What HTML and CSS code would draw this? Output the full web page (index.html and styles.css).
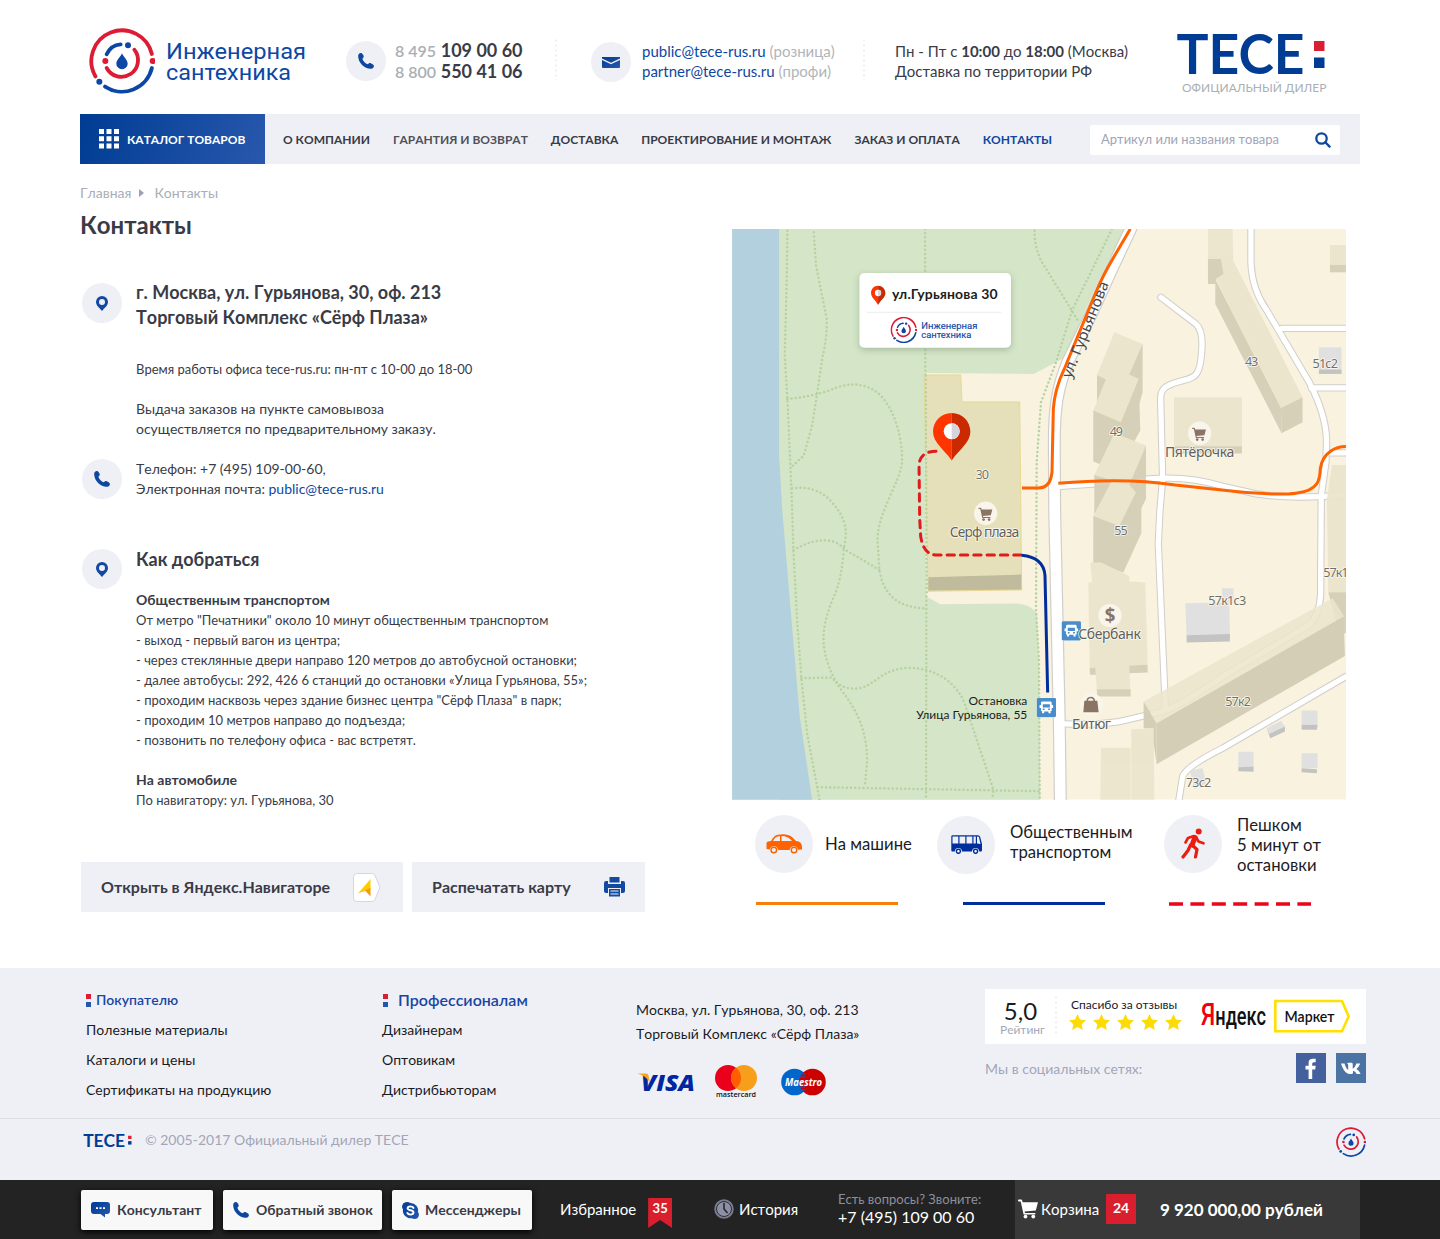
FILE: index.html
```html
<!DOCTYPE html>
<html lang="ru">
<head>
<meta charset="utf-8">
<title>Контакты — Инженерная сантехника</title>
<link rel="stylesheet" href="styles.css">
</head>
<body>
<svg class="defs" aria-hidden="true">
  <defs>
    <linearGradient id="blue" x1="0" y1="0" x2="1" y2="1"><stop offset="0" stop-color="#003c93"/><stop offset="1" stop-color="#2858ad"/></linearGradient>
  </defs>
  <symbol id="i-logo" viewBox="-99 -99 198 198">
    <g fill="none" stroke-width="11.5" stroke-linecap="round">
      <path stroke="#dc1c35" d="M89.600-21A92 92 0 1 0-79.500 46.300"/>
      <path stroke="#0d47a5" d="M89.600 21A92 92 0 0 1-50.800 76.700"/>
      <path stroke="#0d47a5" d="M-46-20A50 50 0 0 1-4-50"/>
      <path stroke="#dc1c35" d="M37-34A50 50 0 1 1-46 21"/>
    </g>
    <circle cx="92" cy="0" r="9" fill="#dc1c35"/><circle cx="-68" cy="62" r="9" fill="#0d47a5"/>
    <circle cx="18" cy="-47" r="9" fill="#0d47a5"/><circle cx="-50" cy="0" r="9" fill="#dc1c35"/>
    <path fill="#0d47a5" d="M0-23C5-11 17-3 17 8A17 16.500 0 0 1-17 8C-17-3-5-11 0-23Z"/>
  </symbol>
  <symbol id="i-tece" viewBox="0 0 150 42">
    <text class="tece-word" x="0.500" y="41" textLength="128" lengthAdjust="spacingAndGlyphs">TECE</text>
    <path fill="#d91f33" d="M138 8h10.500v10h-10.500z"/><path fill="#003c93" d="M138 24.500h10.500v10.500h-10.500z"/>
  </symbol>
  <symbol id="i-phone" viewBox="0 0 16 16">
    <path d="M.2 2.600C.4 1.200 1.500.2 2.700.1 3.500 0 4.100.3 4.500.9l1 1.700c.4.800.2 1.700-.4 2.300l-.7.800c.5 2.200 2.900 4.800 5.400 5.500l.9-.8c.6-.5 1.400-.5 2.100-.2l2.200 1.200c.7.400 1 1 .9 1.800-.2 1.300-1.200 2.500-2.700 2.600C7 16.400-.3 9.500.2 2.600Z"/>
  </symbol>
  <symbol id="i-pin" viewBox="0 0 12 15">
    <path fill-rule="evenodd" d="M6 0a6 6 0 0 1 6 6c0 3.600-3.600 6-6 9-2.400-3-6-5.400-6-9a6 6 0 0 1 6-6Zm0 3a3 3 0 1 0 0 6 3 3 0 0 0 0-6Z"/>
  </symbol>
  <symbol id="i-star" viewBox="0 0 17 16"><path fill="#fcdc04" d="M8.500 0l2.500 5.400 6 .8-4.300 4 1.100 5.800-5.300-2.900L3.200 16l1.100-5.800L0 6.200l6-.8z"/></symbol>
  <symbol id="i-trolley" viewBox="0 0 20 20">
    <path d="M0 1.500C0 .9.400.6.900.6h2.300c.5 0 .9.300 1 .8l.4 1.800H20l-2.200 8.300-11.200 1.100.3 1.300h10.400v1.600H5.600L2.700 2.400H.9C.4 2.400 0 2 0 1.500Z"/><circle cx="7.500" cy="17.600" r="1.900"/><circle cx="15.300" cy="17.600" r="1.900"/>
  </symbol>
  <symbol id="i-busstop" viewBox="0 0 56 56">
    <rect width="56" height="56" rx="6" fill="#fff"/><rect x="1" y="1" width="54" height="54" rx="4" fill="#4a8bc9"/>
    <path fill="#fff" fill-rule="evenodd" d="M17 11h22q4 0 4 4v6h4v8h-4v9h-3v6h-6v-5H22v5h-6v-6h-3v-9H9v-8h4v-6q0-4 4-4Zm1 8v9h20v-9Zm0 12v4h5v-4Zm15 0v4h5v-4Z"/>
  </symbol>
</svg>

<header class="header">
  <a class="brand">
    <svg class="brand-mark"><use href="#i-logo"/></svg>
    <svg class="brand-name" viewBox="0 0 144 48">
      <text x="1" y="20.500" textLength="140" lengthAdjust="spacingAndGlyphs">Инженерная</text>
      <text x="1" y="42" textLength="125" lengthAdjust="spacingAndGlyphs">сантехника</text>
    </svg>
  </a>
  <div class="contact phones">
    <span class="bubble"><svg class="ico-phone"><use href="#i-phone"/></svg></span>
    <p><span>8 495</span> <b>109 00 60</b><br><span>8 800</span> <b>550 41 06</b></p>
  </div>
  <i class="dots"></i>
  <div class="contact mails">
    <span class="bubble"><svg class="ico-mail" viewBox="0 0 18 11"><path fill="url(#blue)" d="M0 0h18v1.500L9 5.800 0 1.500zM0 3l9 4.300L18 3v7q0 1-1 1H1q-1 0-1-1z"/></svg></span>
    <p><a>public@tece-rus.ru</a> (розница)<br><a>partner@tece-rus.ru</a> (профи)</p>
  </div>
  <i class="dots"></i>
  <p class="hours">Пн - Пт с <b>10:00</b> до <b>18:00</b> (Москва)<br>Доставка по территории РФ</p>
  <div class="dealer">
    <svg class="dealer-logo"><use href="#i-tece"/></svg>
    <span>ОФИЦИАЛЬНЫЙ ДИЛЕР</span>
  </div>
</header>

<nav class="nav">
  <a class="catalog">
    <svg viewBox="0 0 20 20"><path fill="#fff" d="M0 0h5v5H0zm7.500 0h5v5h-5zM15 0h5v5h-5zM0 7.200h5v5H0zm7.500 0h5v5h-5zm7.500 0h5v5h-5zM0 14.400h5v5H0zm7.500 0h5v5h-5zm7.500 0h5v5h-5z"/></svg>
    <span>КАТАЛОГ ТОВАРОВ</span>
  </a>
  <a>О КОМПАНИИ</a><a class="soft">ГАРАНТИЯ И ВОЗВРАТ</a><a>ДОСТАВКА</a><a>ПРОЕКТИРОВАНИЕ И МОНТАЖ</a><a>ЗАКАЗ И ОПЛАТА</a><a class="active">КОНТАКТЫ</a>
  <div class="search">
    <span>Артикул или названия товара</span>
    <svg viewBox="0 0 16 16"><circle cx="6.500" cy="6.500" r="5.200"/><path d="M10.300 10.300l4.300 4.300"/></svg>
  </div>
</nav>

<main class="main">
  <section class="info">
    <div class="crumbs"><a>Главная</a><i></i><span>Контакты</span></div>
    <h1>Контакты</h1>

    <div class="row place">
      <span class="bubble"><svg class="ico-pin"><use href="#i-pin"/></svg></span>
      <div>
        <h2>г. Москва, ул. Гурьянова, 30, оф. 213<br>Торговый Комплекс «Сёрф Плаза»</h2>
        <p class="small">Время работы офиса tece-rus.ru: пн-пт с 10-00 до 18-00</p>
        <p class="pickup">Выдача заказов на пункте самовывоза<br>осуществляется по предварительному заказу.</p>
      </div>
    </div>
    <div class="row call">
      <span class="bubble"><svg class="ico-phone"><use href="#i-phone"/></svg></span>
      <p>Телефон: +7 (495) 109-00-60,<br>Электронная почта: <a>public@tece-rus.ru</a></p>
    </div>
    <div class="row route">
      <span class="bubble"><svg class="ico-pin"><use href="#i-pin"/></svg></span>
      <div>
        <h2>Как добраться</h2>
        <h3>Общественным транспортом</h3>
        <p class="small">От метро "Печатники" около 10 минут общественным транспортом<br>
          - выход - первый вагон из центра;<br>
          - через стеклянные двери направо 120 метров до автобусной остановки;<br>
          - далее автобусы: 292, 426 6 станций до остановки «Улица Гурьянова, 55»;<br>
          - проходим насквозь через здание бизнес центра "Сёрф Плаза" в парк;<br>
          - проходим 10 метров направо до подъезда;<br>
          - позвонить по телефону офиса - вас встретят.</p>
        <h3 class="car">На автомобиле</h3>
        <p class="small">По навигатору: ул. Гурьянова, 30</p>
      </div>
    </div>

    <div class="actions">
      <a class="btn">Открыть в Яндекс.Навигаторе
        <svg class="ico-navi" viewBox="0 0 28 29"><path fill="#fff" stroke="#d4d7df" d="M4 .500h15q2 0 3 2l5 12-5 12q-1 2-3 2H4Q.500 28.500.500 25V4Q.500.500 4 .500Z"/><path fill="#fc0" d="M17.500 6v10.500l-5.500.500-7 3.500z"/><path fill="#f59a00" d="M17.500 15v8.500L12.500 18 5 20z"/></svg>
      </a>
      <a class="btn">Распечатать карту
        <svg class="ico-print" viewBox="0 0 21 20"><path fill="#124aa2" d="M5.500 0h10v5.500h-10zM2 4h2v3h13V4h2q2 0 2 2v8q0 2-2 2h-2v-5H4v5H2q-2 0-2-2V6q0-2 2-2ZM5 12h11v7.500H5zm1.500 1.500v1h8v-1zm0 3v1h8v-1z" fill-rule="evenodd"/></svg>
      </a>
    </div>
  </section>

  <section class="where">
    <svg class="map" viewBox="0 0 1842 1712">
      <rect width="1842" height="1712" fill="#f8f2de"/>
      <path fill="#d4e5c8" d="M141 0H1177L1127 100 1062 240 1022 330 995 388 905 435 585 432 577 440 583 1103 625 1126 850 1124Q905 1128 915 1160L921 1300 925 1713H141Z"/>
      <path fill="#b3d0df" d="M0 0H141V680L151 850 180 1193 203 1463 240 1713H0Z"/>

      <g class="trail">
        <path d="M166 5L164 150 158 380 166 510 178 780 184 963 195 1173 208 1348 225 1513 255 1673 262 1713"/>
        <path d="M245 10L252 110 284 270Q285 330 272 380L255 495 240 590 215 680 176 716"/>
        <path d="M166 510Q230 505 290 485C350 460 370 465 400 472 480 495 512 620 510 700 505 760 430 860 437 943L442 1023Q460 1138 583 1138"/>
        <path d="M180 778Q250 770 290 810 350 870 340 930L335 963Q330 1040 310 1093 270 1180 275 1243 280 1310 325 1380C380 1450 405 1510 405 1600L398 1675"/>
        <path d="M184 963Q290 905 340 963L442 1023"/>
        <path d="M208 1348L300 1346Q330 1385 380 1378C430 1370 450 1318 530 1317 620 1317 680 1370 700 1430L740 1550 785 1685 780 1713"/>
        <path d="M579 0L580 440M583 1103L582 1713M257 1675L921 1687"/>
        <path d="M908 5Q905 50 930 100L1020 245 1040 280"/>
        <path d="M1140 0L1020 245 972 400 927 520 914 700 912 1143 921 1293 923 1713"/>
      </g>

      <g class="road-edge">
        <path class="wide" d="M1196 0L1142 115 1085 240 1007 400C975 480 967 540 967 640L968 843 982 1483 985 1713"/>
        <path d="M984 772L1112 763 1212 752 1292 748Q1380 745 1472 772L1572 795Q1682 812 1842 798"/>
        <path d="M1287 205L1392 285Q1412 305 1410 350C1407 440 1392 445 1352 455 1287 470 1286 490 1286 510L1292 750 1284 843 1279 943 1297 1363 1300 1440"/>
        <path d="M1557 0V100Q1560 180 1602 240L1732 460Q1784 560 1784 640L1782 700 1768 800 1766 1100Q1762 1160 1732 1188L1472 1343Q1342 1433 1292 1448L1162 1478Q1092 1488 1002 1485"/>
        <path d="M1650 298H1842M1738 477H1842M1788 672H1842M1842 1343L1472 1558Q1362 1613 1352 1643L1341 1713"/>
      </g>
      <g class="road">
        <path class="wide" d="M1196 0L1142 115 1085 240 1007 400C975 480 967 540 967 640L968 843 982 1483 985 1713"/>
        <path d="M984 772L1112 763 1212 752 1292 748Q1380 745 1472 772L1572 795Q1682 812 1842 798"/>
        <path d="M1287 205L1392 285Q1412 305 1410 350C1407 440 1392 445 1352 455 1287 470 1286 490 1286 510L1292 750 1284 843 1279 943 1297 1363 1300 1440"/>
        <path d="M1557 0V100Q1560 180 1602 240L1732 460Q1784 560 1784 640L1782 700 1768 800 1766 1100Q1762 1160 1732 1188L1472 1343Q1342 1433 1292 1448L1162 1478Q1092 1488 1002 1485"/>
        <path d="M1650 298H1842M1738 477H1842M1788 672H1842M1842 1343L1472 1558Q1362 1613 1352 1643L1341 1713"/>
      </g>

      <path fill="#e5e0b9" stroke="#e8d893" stroke-width="3" d="M576 438H686L690 519H863L869 1083 588 1087Z"/>
      <path fill="#bfbb9c" d="M589 1045L868 1037V1082L589 1085Z"/>
      <path class="trail" d="M581 440L584 1100"/>

      <g transform="translate(912 0)" opacity=".93">
        <path class="side" d="M183 438L320 345V490L300 560H183Z"/><path class="roof" d="M183 438L235 310 320 345 280 437 210 452Z"/>
        <path class="side" d="M172 545L308 450 313 605 280 665 190 705 172 698Z"/><path class="roof" d="M172 545L210 450 183 438 280 437 308 450 255 580Z"/>
        <path class="side" d="M175 738L330 650V810L300 870 175 855Z"/><path class="roof" d="M175 738L235 613 330 650 280 768 228 755Z"/>
        <path class="side" d="M172 861L316 800V913L262 1031 172 1003Z"/><path class="roof" d="M172 861L228 755 280 768 300 790 250 891Z"/>
        <path class="roof" d="M163 1001H195L280 1041V1058L328 1061 335 1308 280 1310 283 1383H182L178 1315 161 1318 157 1061H168Z"/>
        <path class="side" d="M161 1318L178 1315 180 1338H162ZM280 1310L335 1308V1331L280 1333ZM182 1381H284V1403H184Z"/>
        <path class="roof" d="M516 0H590L592 95 800 505 735 537 540 150 563 135 555 90H516Z"/>
        <path class="side" d="M516 90H555L563 135 540 150V165H516ZM538 150L735 537 737 613 538 225Z"/><path class="side" d="M735 537L800 505V580L737 613Z"/>
        <path class="roof" d="M414 505H618V655H414Z"/><path class="side" d="M414 652H618V674H414Z"/>
        <path class="roof" d="M882 48H930V108H882Z"/><path class="side" d="M882 108H930V130H882Z"/>
        <path class="roof" d="M888 708H930V1090H877L873 810Z"/><path class="side" d="M877 1090H930V1213H910Z"/>
        <path class="roof" d="M286 1501L353 1499 355 1713H286ZM195 1557H284V1713H193Z"/>
      </g>
      <g transform="translate(912 843)">
        <path class="roof" opacity=".85" d="M323 575L890 265 925 320 362 640Z"/>
        <path class="side" d="M362 640L923 320 927 438 362 763Z"/><path class="side" d="M323 575L362 640V763L353 700V655H323Z"/>
        <path class="shed" d="M448 280L580 278 582 374 452 378ZM558 235H593V280H558ZM797 602H845V645H797ZM607 726H653V770L607 772ZM797 730H845V775H797ZM692 655L735 633 747 650 700 672ZM462 782L500 775 510 820 475 838Z"/>
        <path class="shed-side" d="M452 376L582 372V395L452 398ZM797 645H845L843 660H797ZM607 772L653 770V786L607 784ZM797 775L843 778V790L797 787ZM692 655L700 672 747 650V665L703 685Z"/>
      </g>
      <path class="shed" d="M1761 355H1829V424H1761Z"/><path class="shed-side" d="M1761 422H1829V435H1761Z"/>

      <g fill="none" stroke-width="9">
        <path stroke="#ff6200" d="M1195 0L1142 90Q1110 145 1092 190L1042 310 997 420Q968 480 964 540L960 730Q955 777 920 777H870"/>
        <path stroke="#ff6200" d="M979 763Q1180 745 1330 768L1512 788Q1640 800 1692 793C1762 785 1764 750 1765 720 1772 670 1812 653 1842 653"/>
        <path stroke="#e01b1b" stroke-dasharray="22 18" stroke-linecap="round" d="M612 667Q562 668 561 710L563 870 566 923Q575 978 612 978H869"/>
        <path stroke="#002f9c" d="M869 979Q935 985 939 1040L947 1391"/>
      </g>

      <g class="poi"><circle cx="761" cy="853" r="35"/><circle cx="1403" cy="613" r="35"/><circle cx="1134" cy="1160" r="35"/><circle cx="1078" cy="1428" r="35"/></g>
      <g fill="#8a7564">
        <use href="#i-trolley" x="738" y="835" width="44" height="42"/><use href="#i-trolley" x="1379" y="595" width="44" height="42"/>
        <path d="M1057 1416H1096L1100 1450H1054Z"/><path fill="none" stroke="#8a7564" stroke-width="5" d="M1066 1420Q1064 1406 1076 1406 1088 1406 1087 1420"/>
      </g>
      <text class="dollar" x="1134" y="1180" text-anchor="middle">$</text>
      <use href="#i-busstop" x="988" y="1176" width="60" height="60"/><use href="#i-busstop" x="913" y="1406" width="60" height="60"/>

      <g class="label">
        <text x="731" y="750" textLength="40">30</text><text x="1539" y="412" textLength="40">43</text>
        <text x="1742" y="418" textLength="76">51с2</text><text x="1133" y="620" textLength="40">49</text>
        <text x="1147" y="918" textLength="40">55</text><text x="1429" y="1129" textLength="114">57к1с3</text>
        <text x="1774" y="1043" textLength="76">57к1</text><text x="1480" y="1431" textLength="77">57к2</text>
        <text x="1362" y="1674" textLength="76">73с2</text>
      </g>
      <g class="label name">
        <text x="653" y="923" textLength="209">Серф плаза</text><text x="1299" y="685" textLength="208">Пятёрочка</text>
        <text x="1039" y="1230" textLength="188">Сбербанк</text><text x="1020" y="1499" textLength="117">Битюг</text>
      </g>
      <text class="street" transform="translate(1016 450) rotate(-68)" textLength="308" lengthAdjust="spacingAndGlyphs">ул. Гурьянова</text>
      <g class="stop" text-anchor="end"><text x="886" y="1428">Остановка</text><text x="886" y="1471">Улица Гурьянова, 55</text></g>

      <path fill="#ff3500" d="M659 552C627 552 603 577 603 608 603 642 635 660 659 695Z"/>
      <path fill="#cb2a00" d="M659 552C691 552 715 577 715 608 715 642 683 660 659 695Z"/>
      <circle cx="659" cy="607" r="24" fill="#fff"/><path fill="#d5d5dd" d="M659 583a24 24 0 0 1 0 48z"/>

      <g class="popup"><rect x="382" y="132" width="455" height="224" rx="15" fill="#fff"/></g>
      <path fill="#ff3500" d="M438 170C425 170 417 180 417 192 417 206 430 212 438 228Z"/>
      <path fill="#cb2a00" d="M438 170C451 170 460 180 460 192 460 206 447 212 438 228Z"/>
      <circle cx="438" cy="192" r="9.500" fill="#fff"/><path fill="#d5d5dd" d="M438 182.500a9.500 9.500 0 0 1 0 19z"/>
      <text class="popup-title" x="480" y="210" textLength="317">ул.Гурьянова 30</text>
      <path stroke="#ececef" stroke-width="3" d="M405 250H807"/>
      <use href="#i-logo" x="475" y="263" width="80" height="80"/>
      <g class="popup-brand"><text x="568" y="300" textLength="168" lengthAdjust="spacingAndGlyphs">Инженерная</text><text x="568" y="326" textLength="150" lengthAdjust="spacingAndGlyphs">сантехника</text></g>
    </svg>

    <div class="legend">
      <div><span class="bubble big"><svg viewBox="0 0 36 20" width="36" height="20"><path fill="#ff6200" fill-rule="evenodd" d="M.5 15V9.500Q.5 8 2 7.500L5 7Q8 1 12 .7 21-.8 26 3l4 4q6 .5 6 6v2.500l-4 .3a4.200 4.200 0 0 0-8.300.2H12A4.200 4.200 0 0 0 3.700 15.500ZM7 7h7V2.200Q9 2 7 7Zm8.500 0H26Q22 2 15.500 2Z"/><g fill="none" stroke="#ff6200" stroke-width="1.400"><circle cx="7.800" cy="16" r="2.800"/><circle cx="28" cy="16" r="2.800"/></g></svg></span><p>На машине</p></div>
      <div class="l-bus"><span class="bubble big"><svg viewBox="0 0 31 19" width="31" height="19"><path fill="#002f9c" fill-rule="evenodd" d="M1.500.3H27q1.700 0 2.200 1.700L31 9v6.500q0 1-1 1h-1.800a3.600 3.600 0 0 0-7.200 0H11a3.600 3.600 0 0 0-7.200 0H1.500Q.3 16.500.3 15.500V1.500Q.3.300 1.500.300ZM1.500 1.500V8.500H7.300V1.500Zm7 0V8.500h5.800V1.500Zm7 0V8.500H21.300V1.500Zm7 0V8.500h2.300V1.500Zm3.500 0V8.500l3.500.5L28 2.300Q27.800 1.500 27 1.500Z"/><g fill="#fff" stroke="#002f9c" stroke-width="1.500"><circle cx="7.400" cy="16.300" r="2"/><circle cx="24.600" cy="16.300" r="2"/></g></svg></span><p>Общественным<br>транспортом</p></div>
      <div><span class="bubble big"><svg viewBox="0 0 24 31" width="24" height="31"><circle cx="17.700" cy="3.400" r="3" fill="#ea1d0f"/><g fill="none" stroke="#ea1d0f" stroke-linecap="round" stroke-linejoin="round"><path stroke-width="5" d="M14 9.500L11 17"/><path stroke-width="2.600" d="M13 8L7 10 4.500 14.500M15 9l2.500 4.500 5 1.800"/><path stroke-width="3.200" d="M11 17l5 4.500L14.500 29M9.500 17L7 22.500 2 29"/></g></svg></span><p>Пешком<br>5 минут от<br>остановки</p></div>
    </div>
    <div class="lines"><i class="l1"></i><i class="l2"></i><svg viewBox="0 0 142 4" width="142" height="4"><path stroke="#ea0618" stroke-width="3.500" stroke-dasharray="14 7.400" d="M0 2H142"/></svg></div>
  </section>
</main>

<footer class="footer">
  <div class="cols">
    <ul class="c1"><li class="head"><i></i>Покупателю</li><li>Полезные материалы</li><li>Каталоги и цены</li><li>Сертификаты на продукцию</li></ul>
    <ul class="c2"><li class="head pro"><i></i>Профессионалам</li><li>Дизайнерам</li><li>Оптовикам</li><li>Дистрибьюторам</li></ul>
    <div class="c3">
      <p>Москва, ул. Гурьянова, 30, оф. 213<br>Торговый Комплекс «Сёрф Плаза»</p>
      <svg class="pay" viewBox="0 0 192 34" width="192" height="34">
        <text class="visa" x="5" y="26" textLength="54" lengthAdjust="spacingAndGlyphs">VISA</text>
        <path fill="#f9a51a" d="M1 8.500h9q2 0 2.500 2L14 18Q10 10.500 1 8.500Z"/>
        <circle cx="92" cy="13" r="13" fill="#ea001b"/><circle cx="108" cy="13" r="13" fill="#f79e1b"/><path fill="#ff5f00" d="M100 2.700a13 13 0 0 1 0 20.600 13 13 0 0 1 0-20.600Z"/>
        <text class="mc" x="80" y="32" textLength="40" lengthAdjust="spacingAndGlyphs">mastercard</text>
        <circle cx="158.500" cy="17" r="13.300" fill="#0066cb"/><circle cx="176.500" cy="17" r="13.300" fill="#cc0000"/>
        <path stroke="#0066cb" stroke-width="1.200" d="M163.500 9h6M163.500 12h6M163.500 22h6M163.500 25h6"/>
        <text class="maestro" x="149" y="20.500" textLength="37" lengthAdjust="spacingAndGlyphs">Maestro</text>
      </svg>
    </div>
    <div class="c4">
      <div class="reviews">
        <div class="score"><b>5,0</b><span>Рейтинг</span></div>
        <i class="dots"></i>
        <div class="stars"><span>Спасибо за отзывы</span><div><svg><use href="#i-star"/></svg><svg><use href="#i-star"/></svg><svg><use href="#i-star"/></svg><svg><use href="#i-star"/></svg><svg><use href="#i-star"/></svg></div></div>
        <svg class="yandex" viewBox="0 0 150 36" width="150" height="36">
          <text class="ya" x="1" y="27" textLength="65" lengthAdjust="spacingAndGlyphs"><tspan class="ya-first">Я</tspan>ндекс</text>
          <path fill="#fff" stroke="#ffe000" stroke-width="2.600" d="M75.300 3H142L148.600 18.500 142 33.200H75.300Z"/>
          <text class="market" x="84.500" y="23.500" textLength="50" lengthAdjust="spacingAndGlyphs">Маркет</text>
        </svg>
      </div>
      <div class="social"><span>Мы в социальных сетях:</span>
        <svg viewBox="0 0 30 30"><rect width="30" height="30" fill="#45619d"/><path fill="#fff" d="M12.600 26V16.500H9.500V12.800h3.100V10q0-4.200 4.300-4.200h2.800v3.400h-2q-1.500 0-1.500 1.500v2.100h3.500l-.5 3.700h-3V26z"/></svg>
        <svg viewBox="0 0 30 30"><rect width="30" height="30" fill="#4b74a4"/><path fill="#fff" d="M14 21C9 21 6.500 15 5 10.500h3.500C9.500 14 11 16.500 12.200 17v-5q-.2-1.300-1.200-1.500.5-.8 2-.8h2.800q.9.200.9 1.300v4.800c1.500-.5 2.800-2.800 3.600-5.300h3.800c-.5 2.300-2 4-3.700 5.500 1.800 1.200 3.300 2.700 4.200 5h-4c-.8-1.700-2-3-3.600-3.300v2.200q-.1 1.100-1.300 1.100Z"/></svg>
      </div>
    </div>
  </div>
  <div class="copy">
    <svg class="copy-logo"><use href="#i-tece"/></svg>
    <span>© 2005-2017 Официальный дилер TECE</span>
    <svg class="copy-mark"><use href="#i-logo"/></svg>
  </div>
</footer>

<div class="bar">
  <a class="b-btn w1"><svg viewBox="0 0 19 16" width="19" height="16"><path fill="url(#blue)" d="M3 0h13q3 0 3 3v6q0 3-3 3h-2v3.500L9.500 12H3q-3 0-3-3V3q0-3 3-3Z"/><path fill="#fff" d="M5 5.200h2v1.800H5zm3.500 0h2v1.800h-2zm3.500 0h2v1.800h-2z"/></svg>Консультант</a>
  <a class="b-btn w2"><svg class="ico-phone"><use href="#i-phone"/></svg>Обратный звонок</a>
  <a class="b-btn w3"><svg viewBox="0 0 17 17" width="17" height="17"><path fill="url(#blue)" d="M4.800 0Q7 0 8.500.900A7.600 7.600 0 0 1 16 10q1 1.500 1 2.500Q16.500 17 12.500 17q-1.500 0-2.700-.8A7.600 7.600 0 0 1 1 7.500Q0 6 0 4.800 .5.300 4.800 0Z"/><path fill="none" stroke="#fff" stroke-width="1.900" stroke-linecap="round" d="M11.500 6Q10.800 4.400 8.500 4.400 5.600 4.500 5.600 6.300 5.700 7.800 8.500 8.300 11.600 8.900 11.500 10.700 11.300 12.600 8.500 12.600 6 12.500 5.400 10.900"/></svg>Мессенджеры</a>
  <a class="fav">Избранное <b>35</b></a>
  <a class="hist"><svg viewBox="0 0 20 20" width="20" height="20"><circle cx="10" cy="10" r="9" fill="#8b90a4" stroke="#777b8c" stroke-width="1.500"/><circle cx="10" cy="10" r="7.500" fill="#8b90a4" stroke="#2c2c33"/><path fill="none" stroke="#222" stroke-width="1.500" d="M10 4v6l3.500 4"/></svg>История</a>
  <p class="ask"><span>Есть вопросы? Звоните:</span><br>+7 (495) 109 00 60</p>
  <div class="cart"><svg width="20" height="20" fill="#fff"><use href="#i-trolley"/></svg><span>Корзина</span><b class="count">24</b><b class="sum">9 920 000,00 рублей</b></div>
</div>
</body>
</html>
```
FILE: styles.css
```css
*{box-sizing:border-box}
body{margin:0;width:1440px;background:#fff;color:#393b46;font:14px/20px Lato,"Noto Sans",sans-serif;font-kerning:none}
p,h1,h2,h3,ul{margin:0;padding:0}
ul{list-style:none}
svg{display:block;flex:none}
.defs{position:absolute;width:0;height:0}
a{color:inherit;text-decoration:none;white-space:nowrap}
p{white-space:nowrap}

.bubble{display:flex;flex:none;width:40px;height:40px;align-items:center;justify-content:center;border-radius:50%;background:#eff0f6}
.bubble.big{width:58px;height:58px}
.ico-phone{width:16px;height:16px;fill:#0f479f}
.ico-mail{width:18px;height:11px}
.ico-pin{width:12px;height:15px;fill:#124aa3}
.dots{width:2px;height:42px;background:radial-gradient(circle,#efeff2 1px,transparent 1.200px) 0 0/2px 5px}

.header{display:flex;align-items:flex-start;height:114px;padding-left:88.500px}
.brand{display:flex;padding-top:27.500px}
.brand-mark{width:66px;height:66px}
.brand-name{width:144px;height:48px;margin:10px 0 0 10.500px;overflow:visible}
.brand-name text{font:400 22.500px/1 Roboto,sans-serif;fill:#0d47a5}
.contact{display:flex}
.phones{width:209px;padding-top:41px;margin-left:37px}
.phones p{margin:-1px 0 0 9px;font-size:18px;line-height:21px}
.phones span:not(.bubble){font-size:16px;font-weight:600;color:#a9afb4}
.phones b{font-weight:700}
.header>.dots{margin-top:38px}
.mails{width:272px;margin-left:34px;padding-top:42px}
.mails p{margin:-1px 0 0 11px;font-size:15px;color:#b0b5ba}
.mails a,.call a{color:#0d47a1}
.hours{width:281px;margin-left:30px;padding-top:41px;font-size:15px}
.dealer{display:flex;flex-direction:column;padding-top:33px;font-size:12px;line-height:14px;color:#aab0b5}
.dealer-logo{width:150px;height:42px}
.dealer span{margin:6px 0 0 6px}
.tece-word{font:700 54.500px Lato,sans-serif;fill:#003c93}

.nav{display:flex;align-items:center;width:1280px;height:50px;margin-left:80px;background:#eff0f6;font-size:12px;font-weight:700;gap:23px}
.nav a:not(.catalog),.catalog span{padding-top:2px}
.catalog{display:flex;align-items:center;width:185px;height:50px;margin-right:-5px;padding-left:19px;gap:8px;color:#fff;background:linear-gradient(110deg,#003c93,#2858ad)}
.catalog svg{width:20px;height:20px}
.nav .soft{color:#4f505a}
.nav .active{color:#0d47a1}
.search{display:flex;align-items:center;justify-content:space-between;width:250px;height:30px;margin:2px 20px 0 auto;padding:0 9px 2px 11px;border-radius:2px;background:#fff;font-size:13px;font-weight:400;color:#a0a4b5}
.search svg{width:16px;height:16px;margin-top:2px;fill:none;stroke:#0d47a1;stroke-width:2.300;stroke-linecap:round}

.main{display:grid;grid-template-columns:652px 614px;padding-left:80px;height:804px}
.crumbs{display:flex;align-items:center;height:20px;margin-top:19px;color:#a9adb8}
.crumbs i{margin:0 10px 0 8px;border-left:5px solid #9a9fb2;border-top:4px solid transparent;border-bottom:4px solid transparent}
h1{margin-top:7px;font-size:24px;line-height:30px;font-weight:700}
.row{display:flex;padding-left:2px;gap:14px}
h2{font-size:18px;line-height:25px;font-weight:700}
h3{font-size:14px;line-height:20px;font-weight:700}
.small{font-size:13px}
.place{margin-top:40px}
.place .bubble{margin-top:3px}
.place .small{margin-top:29px}
.pickup{margin-top:20px}
.call{margin-top:20px}
.route{margin-top:49px}
.route .bubble{margin-top:1px}
.route h2{line-height:20px;padding-top:1px;margin-bottom:21px}
.car{margin-top:20px}
.actions{display:flex;gap:9px;margin:52px 0 0 1px}
.btn{display:flex;align-items:center;justify-content:space-between;width:322px;height:50px;padding:0 22px 0 20px;background:#eff0f6;font-size:16px;font-weight:700}
.btn+.btn{width:233px;padding-right:20px}
.ico-navi{width:28px;height:29px}
.ico-print{width:21px;height:20px}

.map{width:614px;height:570.500px;margin-top:65px}
.trail{fill:none;stroke:#b6d2a1;stroke-width:7.500;stroke-linecap:round;stroke-dasharray:0 12.500}
.road,.road-edge{fill:none;stroke-linecap:round}
.road-edge{stroke:#cfcecb;stroke-width:22}
.road{stroke:#fff;stroke-width:16}
.road-edge .wide{stroke-width:39}
.road .wide{stroke-width:32}
.roof{fill:#ece5cc}
.side{fill:#d4ceb7}
.shed{fill:#e1e0e0}
.shed-side{fill:#c4c3c3}
.poi{fill:#f9f5ea}
.label{font:38px "Noto Sans",sans-serif;fill:#6f7068;stroke:#fbf8ee;stroke-width:5;paint-order:stroke;stroke-linejoin:round}
.name{font-size:42px;fill:#5f5f5c}
.dollar{font:700 56px "Noto Sans",sans-serif;fill:#8a7564}
.street{font:44px "Noto Sans",sans-serif;fill:#474747}
.stop{font:36px Lato,sans-serif;fill:#1b1d1b}
.popup{filter:drop-shadow(0 6px 10px rgba(60,90,50,.3))}
.popup-title{font:700 42px Lato,sans-serif;fill:#1c1d22}
.popup-brand{font:400 27px Roboto,sans-serif;fill:#0d47a5;stroke:#0d47a5;stroke-width:.4}

.legend{display:grid;grid-template-columns:182px 227px 180px;margin:15px 0 0 23px;height:75px;color:#1b1c1f;font-size:16.700px;line-height:20.300px}
.legend>div{display:flex;gap:12px}
.legend p{margin-top:19px}
.legend .l-bus{gap:15px}
.legend .l-bus .bubble{margin-top:1px}
.legend .l-bus p{margin-top:7px}
.legend div:last-child{gap:15px}
.legend div:last-child p{margin-top:0}
.lines{display:flex;margin:12px 0 0 24px}
.lines i{width:142px;height:3.500px;margin-right:64.500px;background:#f57f0a}
.lines .l2{background:#002f9c}

.footer{height:212px;background:#eff0f6;color:#1a1b1f}
.cols{display:grid;grid-template-columns:296px 254px 349px 381px;height:150px;padding-left:86px;align-items:start}
.cols ul{padding-top:17px;line-height:30px}
.head{display:flex;gap:5px;font-weight:600;color:#1746a2}
.head i{width:5px;height:13px;margin-top:9px;background:linear-gradient(#d91f33 5px,transparent 5px 8px,#2257ac 8px)}
.pro{font-size:16px;gap:10px;padding-left:1px}
.c3{padding-top:30px}
.c3 p{line-height:24px}
.pay{margin-top:19px}
.visa{font:italic 800 23px "Open Sans",sans-serif;fill:#0026a1}
.mc{font:600 7.500px "Open Sans",sans-serif;fill:#111}
.maestro{font:italic 700 11px "Open Sans",sans-serif;fill:#fff}
.reviews{display:flex;height:55px;margin-top:21px;background:#fff}
.score{display:flex;flex-direction:column;align-items:center;width:72px;padding:10px 0 0 1px}
.score b{margin-left:-2px;font-size:24px;line-height:24px;font-weight:400}
.score span{margin-left:2px;font-size:12px;line-height:14px;color:#a4a8b8}
.reviews .dots{margin:6px 0 0 -2px}
.stars{margin:6px 0 0 14px;font-size:12px;line-height:20px}
.stars div{display:flex;gap:7px;margin:-1px 0 0 -2px}
.stars svg{width:17px;height:16px}
.yandex{margin:9px 0 0 18px;overflow:visible}
.ya{font:500 25px "Roboto",sans-serif;fill:#111}
.ya-first{fill:#f00010;font-size:32px}
.market{font:600 15px Lato,sans-serif;fill:#111}
.social{display:flex;align-items:center;gap:10px;margin-top:9px;color:#a2a6b6}
.social span{margin:2px auto 0 0}
.social svg{width:30px;height:30px}
.copy{display:flex;align-items:center;height:62px;padding:0 74px 20px 83px;border-top:1px solid #dcdde3;color:#a2a6b6}
.copy-logo{width:49px;height:14px;margin-right:13px}
.copy-mark{width:30px;height:30px;margin:4px 0 0 auto}

.bar{display:flex;height:59px;padding-left:81px;background:#232323;color:#fff;font-size:15px}
.b-btn{display:flex;align-items:center;height:40px;margin:10px 10px 0 0;border-radius:2px;background:#f8f8f8;color:#393b46;font-size:14px;font-weight:700;box-shadow:0 2px 6px #000}
.w1{width:132px;padding-left:10px;gap:7px}
.w2{width:159px;padding-left:10px;gap:7px}
.w3{width:140px;padding-left:10px;gap:6px}
.fav{display:flex;width:154px;margin:19px 0 0 18px;gap:12px}
.fav b{width:24px;height:30px;margin-top:-1px;background:#d91f2d;clip-path:polygon(0 0,100% 0,100% 100%,50% 73%,0 100%);font-size:13px;text-align:center}
.hist{display:flex;width:84px;margin:19px 0 0;gap:5px;line-height:21px}
.ask{width:177px;margin:9px 0 0 40px;font-size:16px;line-height:18px}
.ask span{font-size:13px;color:#8b8f9e}
.cart{display:flex;width:345px;height:59px;padding:14px 0 0 3px;background:#393939;line-height:31px}
.cart>svg{margin:5px 3px 0 0}
.cart>span{width:58px}
.count{width:30px;height:30px;margin:0 24px 0 7px;background:#d91f2d;border-radius:1px;font-size:14px;line-height:28px;text-align:center}
.sum{font-size:17px}
```
